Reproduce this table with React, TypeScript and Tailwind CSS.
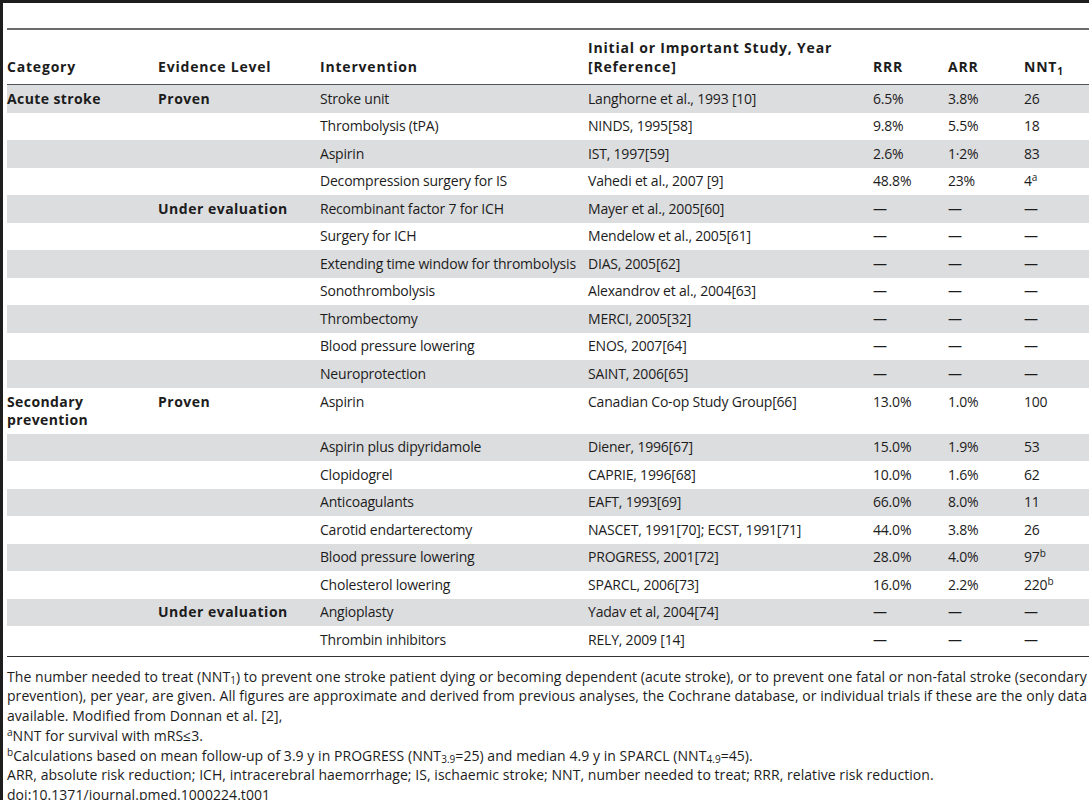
import React from 'react';

type Row = {
  cat?: React.ReactNode;
  level?: string;
  intervention: string;
  study: string;
  rrr: string;
  arr: string;
  nnt: React.ReactNode;
  tall?: boolean;
};

const D = '—';

const rows: Row[] = [
  { cat: 'Acute stroke', level: 'Proven', intervention: 'Stroke unit', study: 'Langhorne et al., 1993 [10]', rrr: '6.5%', arr: '3.8%', nnt: '26' },
  { intervention: 'Thrombolysis (tPA)', study: 'NINDS, 1995[58]', rrr: '9.8%', arr: '5.5%', nnt: '18' },
  { intervention: 'Aspirin', study: 'IST, 1997[59]', rrr: '2.6%', arr: '1·2%', nnt: '83' },
  {
    intervention: 'Decompression surgery for IS',
    study: 'Vahedi et al., 2007 [9]',
    rrr: '48.8%',
    arr: '23%',
    nnt: (
      <>
        4<sup className="text-[10px]">a</sup>
      </>
    ),
  },
  { level: 'Under evaluation', intervention: 'Recombinant factor 7 for ICH', study: 'Mayer et al., 2005[60]', rrr: D, arr: D, nnt: D },
  { intervention: 'Surgery for ICH', study: 'Mendelow et al., 2005[61]', rrr: D, arr: D, nnt: D },
  { intervention: 'Extending time window for thrombolysis', study: 'DIAS, 2005[62]', rrr: D, arr: D, nnt: D },
  { intervention: 'Sonothrombolysis', study: 'Alexandrov et al., 2004[63]', rrr: D, arr: D, nnt: D },
  { intervention: 'Thrombectomy', study: 'MERCI, 2005[32]', rrr: D, arr: D, nnt: D },
  { intervention: 'Blood pressure lowering', study: 'ENOS, 2007[64]', rrr: D, arr: D, nnt: D },
  { intervention: 'Neuroprotection', study: 'SAINT, 2006[65]', rrr: D, arr: D, nnt: D },
  {
    cat: (
      <>
        Secondary
        <br />
        prevention
      </>
    ),
    level: 'Proven',
    intervention: 'Aspirin',
    study: 'Canadian Co-op Study Group[66]',
    rrr: '13.0%',
    arr: '1.0%',
    nnt: '100',
    tall: true,
  },
  { intervention: 'Aspirin plus dipyridamole', study: 'Diener, 1996[67]', rrr: '15.0%', arr: '1.9%', nnt: '53' },
  { intervention: 'Clopidogrel', study: 'CAPRIE, 1996[68]', rrr: '10.0%', arr: '1.6%', nnt: '62' },
  { intervention: 'Anticoagulants', study: 'EAFT, 1993[69]', rrr: '66.0%', arr: '8.0%', nnt: '11' },
  { intervention: 'Carotid endarterectomy', study: 'NASCET, 1991[70]; ECST, 1991[71]', rrr: '44.0%', arr: '3.8%', nnt: '26' },
  {
    intervention: 'Blood pressure lowering',
    study: 'PROGRESS, 2001[72]',
    rrr: '28.0%',
    arr: '4.0%',
    nnt: (
      <>
        97<sup className="text-[10px]">b</sup>
      </>
    ),
  },
  {
    intervention: 'Cholesterol lowering',
    study: 'SPARCL, 2006[73]',
    rrr: '16.0%',
    arr: '2.2%',
    nnt: (
      <>
        220<sup className="text-[10px]">b</sup>
      </>
    ),
  },
  { level: 'Under evaluation', intervention: 'Angioplasty', study: 'Yadav et al, 2004[74]', rrr: D, arr: D, nnt: D },
  { intervention: 'Thrombin inhibitors', study: 'RELY, 2009 [14]', rrr: D, arr: D, nnt: D },
];

const cols = 'grid grid-cols-[151px_162px_268px_285px_75px_76px_1fr]';

export default function App() {
  return (
    <div
      className="h-[800px] overflow-hidden bg-white border-l-[3px] border-t-[3px] border-[#1e1e1e] pl-1 text-[14px] text-[#1c1c1c]"
      style={{ fontFamily: '"Open Sans", "Noto Sans", sans-serif' }}
    >
      {/* header */}
      <div className={`${cols} mt-[25px] h-[57px] border-t-2 border-b-[1.5px] border-t-[#6b6b6b] border-b-[#555] items-end pb-[8px] font-bold leading-[19px] tracking-[0.8px]`}>
        <div>Category</div>
        <div>Evidence Level</div>
        <div>Intervention</div>
        <div>
          Initial or Important Study, Year
          <br />
          [Reference]
        </div>
        <div>RRR</div>
        <div>ARR</div>
        <div>
          NNT<sub className="text-[10px]">1</sub>
        </div>
      </div>

      {/* body */}
      <div>
        {rows.map((r, i) => (
          <div
            key={i}
            className={`${cols} leading-[18px] tracking-[-0.2px] ${i % 2 === 0 ? 'bg-[#dcdddf]' : 'bg-white'} ${
              r.tall ? 'h-[46px] items-start pt-[5px]' : 'h-[27.5px] items-center'
            }`}
          >
            <div className="font-bold tracking-[0.4px]">{r.cat}</div>
            <div className="font-bold tracking-[0.5px]">{r.level}</div>
            <div>{r.intervention}</div>
            <div>{r.study}</div>
            <div>{r.rrr}</div>
            <div>{r.arr}</div>
            <div>{r.nnt}</div>
          </div>
        ))}
      </div>

      {/* footnotes */}
      <div className="border-t-[1.5px] border-[#333] mt-[2px] pt-[10px] leading-[19.8px] whitespace-nowrap tracking-[0.05px]">
        <div>
          The number needed to treat (NNT<sub className="text-[10px]">1</sub>) to prevent one stroke patient dying or becoming dependent (acute stroke), or to prevent one fatal or non-fatal stroke (secondary
        </div>
        <div>
          prevention), per year, are given. All figures are approximate and derived from previous analyses, the Cochrane database, or individual trials if these are the only data
        </div>
        <div>available. Modified from Donnan et al. [2],</div>
        <div>
          <sup className="text-[10px]">a</sup>NNT for survival with mRS≤3.
        </div>
        <div>
          <sup className="text-[10px]">b</sup>Calculations based on mean follow-up of 3.9 y in PROGRESS (NNT<sub className="text-[10px]">3.9</sub>=25) and median 4.9 y in SPARCL (NNT<sub className="text-[10px]">4.9</sub>=45).
        </div>
        <div>ARR, absolute risk reduction; ICH, intracerebral haemorrhage; IS, ischaemic stroke; NNT, number needed to treat; RRR, relative risk reduction.</div>
        <div>doi:10.1371/journal.pmed.1000224.t001</div>
      </div>
    </div>
  );
}
